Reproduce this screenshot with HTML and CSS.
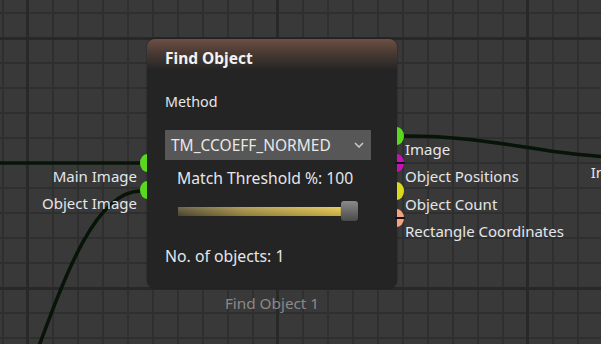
FILE: index.html
```html
<!DOCTYPE html>
<html>
  <head>
    <title>Node Editor - Find Object</title>
    <meta charset="UTF-8" />
    <link rel="stylesheet" href="styles.css">
  </head>
  <body>
    <div class="canvas">
      <svg class="wires" width="601" height="344" viewBox="0 0 601 344">
        <path d="M-20,163 L141,163" />
        <path d="M141,191 C51,191 20,520 -70,520" />
        <path d="M403,136 C505,136 544,158 646,158" />
      </svg>

      <div class="node">
        <div class="node-head">Find Object</div>
        <div class="node-body">
          <div class="field-label">Method</div>
          <div class="select">
            <span>TM_CCOEFF_NORMED</span>
            <svg class="chevron" width="10" height="6" viewBox="0 0 10 6">
              <polyline points="1,1 5,5 9,1" />
            </svg>
          </div>
          <div class="slider-label">Match Threshold %: 100</div>
          <div class="slider">
            <div class="slider-track"></div>
            <div class="slider-handle"></div>
          </div>
          <div class="count">No. of objects: 1</div>
        </div>

        <div class="ports inputs">
          <div class="port green">Main Image</div>
          <div class="port green">Object Image</div>
        </div>

        <div class="ports outputs">
          <div class="port green">Image</div>
          <div class="port magenta split">Object Positions</div>
          <div class="port yellow">Object Count</div>
          <div class="port salmon split">Rectangle Coordinates</div>
        </div>

        <div class="node-name">Find Object 1</div>
      </div>

      <div class="node next">
        <div class="ports inputs">
          <div class="port green">Image</div>
        </div>
      </div>
    </div>
  </body>
</html>
```

FILE: styles.css
```css
body {
  margin: 0;
  font-family: "Noto Sans", "Open Sans", sans-serif;
  font-size: 15px;
  color: #e4e6ea;
  background: #393939;
  overflow: hidden;
}
.canvas {
  position: relative;
  width: 601px;
  height: 344px;
  overflow: hidden;
  background-color: #393939;
  background-image:
    linear-gradient(to right, #282828 3px, transparent 3px),
    linear-gradient(to bottom, #282828 3px, transparent 3px),
    linear-gradient(to right, #2f2f2f 2px, transparent 2px),
    linear-gradient(to bottom, #2f2f2f 2px, transparent 2px);
  background-size: 250px 250px, 250px 250px, 25px 25px, 25px 25px;
  background-position: 26px 0, 0 37px, 2px 0, 0 12px;
}
.wires {
  position: absolute;
  left: 0;
  top: 0;
}
.wires path {
  fill: none;
  stroke: #071407;
  stroke-width: 3.5;
}

/* node */
.node {
  position: absolute;
  left: 147px;
  top: 39px;
  width: 250px;
  height: 249px;
  box-sizing: border-box;
  background: #242424;
  border-radius: 8px;
  box-shadow: 0 0 2px rgba(0,0,0,0.5);
}
.node.next {
  left: 646px;
  top: 20px;
}
.node-head {
  height: 30px;
  padding: 8px 18px 0;
  box-sizing: border-box;
  line-height: 22px;
  font-size: 15.5px;
  font-weight: bold;
  color: #f2f2f2;
  border-radius: 8px 8px 0 0;
  background: linear-gradient(to bottom, #6d5045 0%, #4a3a33 45%, #262626 100%);
}
.node-body {
  padding: 0 18px;
}
.field-label {
  margin-top: 22px;
  line-height: 22px;
  font-size: 14.3px;
}
.select {
  display: flex;
  align-items: center;
  justify-content: space-between;
  margin-top: 17px;
  width: 206px;
  height: 30px;
  padding: 0 7px 0 6px;
  box-sizing: border-box;
  background: #575757;
  color: #e8e8e8;
  font-size: 15.5px;
}
.chevron polyline {
  fill: none;
  stroke: #c8c8c8;
  stroke-width: 1.6;
}
.slider-label {
  margin: 7px 0 0 12px;
  line-height: 22px;
  font-size: 15.7px;
}
.slider {
  display: flex;
  align-items: center;
  margin: 12px 0 0 13px;
  height: 20px;
}
.slider-track {
  width: 166px;
  height: 9px;
  background:
    linear-gradient(to bottom, rgba(255,255,255,0.15), rgba(0,0,0,0.15)),
    linear-gradient(to right, #564f33, #a89244 40%, #e8c84a);
}
.slider-handle {
  width: 17px;
  height: 20px;
  margin-left: -3px;
  border-radius: 3px;
  background: linear-gradient(to bottom, #8a8a8a, #4a4a4a);
  box-shadow: 0 0 1px #111;
}
.count {
  margin-top: 24px;
  line-height: 22px;
  font-size: 15.8px;
}
.node-name {
  position: absolute;
  left: 0;
  right: 0;
  top: 253px;
  text-align: center;
  line-height: 22px;
  font-size: 15.3px;
  color: #8a8a8a;
}

/* ports */
.ports {
  position: absolute;
  display: flex;
  flex-direction: column;
}
.inputs {
  right: 100%;
  top: 124px;
  align-items: flex-end;
}
.outputs {
  left: 100%;
  top: 97px;
}
.next .inputs {
  top: 139px;
}
.port {
  position: relative;
  height: 27.3px;
  line-height: 27px;
  white-space: nowrap;
}
.inputs .port {
  padding-right: 10px;
}
.outputs .port {
  padding-left: 8px;
}
.port::before {
  content: "";
  position: absolute;
  top: -9px;
  width: 7px;
  height: 18px;
  background: var(--dot);
}
.inputs .port::before {
  right: 0;
  border-radius: 100% 0 0 100% / 50% 0 0 50%;
}
.outputs .port::before {
  left: 0;
  border-radius: 0 100% 100% 0 / 0 50% 50% 0;
}
.port.split::after {
  content: "";
  position: absolute;
  left: -2px;
  top: -1px;
  width: 10px;
  height: 2px;
  background: #141414;
}
.green { --dot: #5ad820; }
.magenta { --dot: #c412b4; }
.yellow { --dot: #dada1c; }
.salmon { --dot: #f7a27e; }
```
